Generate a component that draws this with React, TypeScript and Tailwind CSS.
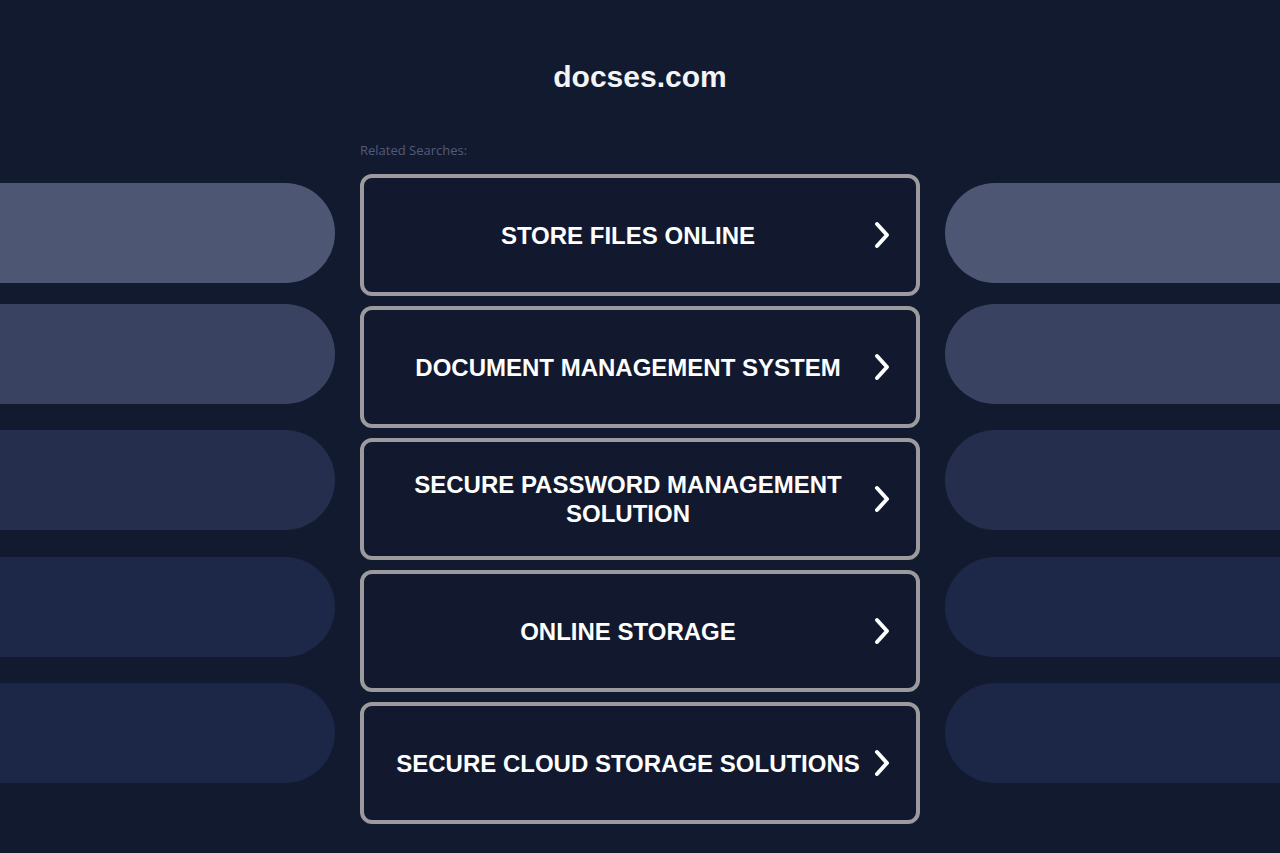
const searches = [
  ['STORE FILES ONLINE'],
  ['DOCUMENT MANAGEMENT SYSTEM'],
  ['SECURE PASSWORD MANAGEMENT', 'SOLUTION'],
  ['ONLINE STORAGE'],
  ['SECURE CLOUD STORAGE SOLUTIONS'],
]

const pills = [
  { color: 'bg-[#4d5773]', mt: 'mt-[183px]' },
  { color: 'bg-[#3a4261]', mt: 'mt-[21px]' },
  { color: 'bg-[#262e4e]', mt: 'mt-[26px]' },
  { color: 'bg-[#1d2748]', mt: 'mt-[27px]' },
  { color: 'bg-[#1c2647]', mt: 'mt-[26px]' },
]

function Chevron() {
  return (
    <svg width="20" height="30" viewBox="0 0 20 30" fill="none" className="shrink-0">
      <path d="M5 4 L15 15 L5 26" stroke="white" strokeWidth="4" strokeLinecap="round" strokeLinejoin="round" />
    </svg>
  )
}

export default function App() {
  return (
    <div className="min-h-[853px] w-full overflow-hidden bg-[#121a2f] font-['Liberation_Sans',Arial,sans-serif]">
      <div className="grid grid-cols-[335px_560px_335px] gap-x-[25px]">
        {/* Left decorative pills */}
        <div className="flex flex-col">
          {pills.map((p, i) => (
            <div key={i} className={`${p.mt} ${p.color} h-[100px] rounded-r-[50px]`} />
          ))}
        </div>

        {/* Center column */}
        <div className="flex flex-col">
          <h1 className="mt-[60px] text-center text-[30px] font-bold leading-[34px] text-[#f3f4f6]">docses.com</h1>
          <p className="mt-[48px] font-['Open_Sans',sans-serif] text-[13px] leading-[17px] text-[#525b7b]">Related Searches:</p>
          <div className="mt-[15px] flex flex-col gap-[10px]">
            {searches.map((lines, i) => (
              <div
                key={i}
                className="flex h-[122px] items-center rounded-[12px] border-4 border-[#9b9b9f] bg-[#12192e] pl-[20px] pr-[24px]"
              >
                <div className="flex-1 text-center text-[24px] font-bold leading-[29px] text-white">
                  {lines.map((l, j) => (
                    <div key={j}>{l}</div>
                  ))}
                </div>
                <Chevron />
              </div>
            ))}
          </div>
        </div>

        {/* Right decorative pills */}
        <div className="flex flex-col">
          {pills.map((p, i) => (
            <div key={i} className={`${p.mt} ${p.color} h-[100px] rounded-l-[50px]`} />
          ))}
        </div>
      </div>
    </div>
  )
}
